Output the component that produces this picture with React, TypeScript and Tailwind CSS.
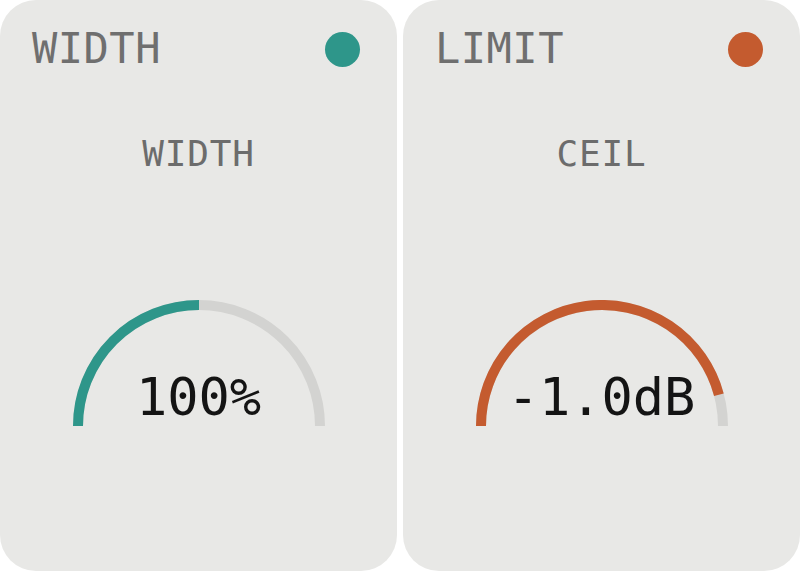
type GaugeProps = {
  fraction: number;
  color: string;
  value: string;
};

const R = 121;
const C = 126;

function point(fraction: number) {
  const angle = Math.PI * (1 - fraction);
  const x = C + R * Math.cos(angle);
  const y = C - R * Math.sin(angle);
  return `${x.toFixed(2)} ${y.toFixed(2)}`;
}

function Gauge({ fraction, color, value }: GaugeProps) {
  return (
    <div className="relative mt-[128px] h-[126px] w-[252px]">
      <svg width="252" height="126" viewBox="0 0 252 126" className="block">
        <path d={`M ${point(0)} A ${R} ${R} 0 0 1 ${point(1)}`} fill="none" stroke="#d3d3d1" strokeWidth="10" />
        <path d={`M ${point(0)} A ${R} ${R} 0 0 1 ${point(fraction)}`} fill="none" stroke={color} strokeWidth="10" />
      </svg>
      <div className="absolute inset-x-0 top-[71px] text-center text-[52px] leading-[52px] text-[#141414]">
        {value}
      </div>
    </div>
  );
}

type ModuleCardProps = {
  title: string;
  label: string;
  dot: string;
  fraction: number;
  value: string;
};

function ModuleCard({ title, label, dot, fraction, value }: ModuleCardProps) {
  return (
    <div className="flex h-full w-[397px] flex-col items-center rounded-[36px] bg-[#e8e8e6]">
      <div className="flex items-center justify-between self-stretch pl-8 pr-[37px] pt-7">
        <span className="text-[42px] leading-[42px] tracking-[0.5px] text-[#6f6f6f]">{title}</span>
        <span className="h-[35px] w-[35px] rounded-full" style={{ backgroundColor: dot }} />
      </div>
      <div className="mt-[66px] text-[36px] leading-[36px] tracking-[0.8px] text-[#6c6c6c]">{label}</div>
      <Gauge fraction={fraction} color={dot} value={value} />
    </div>
  );
}

export default function App() {
  return (
    <div className="flex h-[571px] w-[800px] gap-[6px] bg-white font-['DejaVu_Sans_Mono',monospace]">
      <ModuleCard title="WIDTH" label="WIDTH" dot="#2e968a" fraction={0.5} value="100%" />
      <ModuleCard title="LIMIT" label="CEIL" dot="#c45b2f" fraction={11 / 12} value="-1.0dB" />
    </div>
  );
}
